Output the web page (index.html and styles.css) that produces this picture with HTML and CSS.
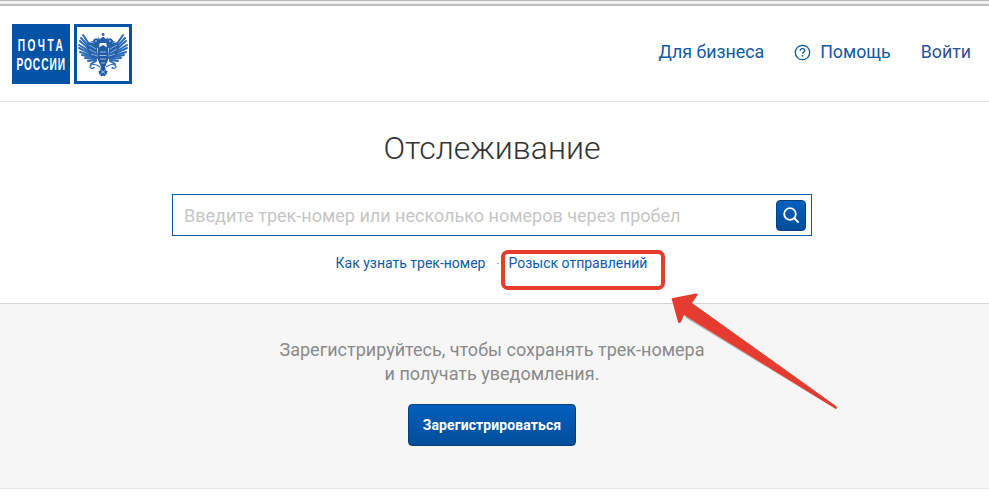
FILE: index.html
```html
<!DOCTYPE html>
<html lang="ru">
<head>
    <meta charset="UTF-8">
    <title>Отслеживание</title>
    <link rel="stylesheet" href="styles.css">
</head>
<body>
    <div class="browser-edge"></div>
    <header class="header">
        <a class="logo" href="#">
            <span class="logo-text"><span class="logo-line logo-line-wide">ПОЧТА</span><span class="logo-line">РОССИИ</span></span>
            <span class="logo-emblem">
                <svg width="52" height="54" viewBox="0 0 52 54">
                    <defs>
                        <g id="wing">
                            <g stroke="#2a6ab8" stroke-width="2" stroke-linecap="round" fill="none">
                                <path d="M19 27 L6 8"/>
                                <path d="M19 27 L4 11"/>
                                <path d="M19 28 L3 14"/>
                                <path d="M19 28 L2 18"/>
                                <path d="M19 29 L2 21"/>
                                <path d="M19 30 L3 25"/>
                                <path d="M19 31 L5 28"/>
                                <path d="M19 32 L8 31"/>
                                <path d="M19 33 L11 34"/>
                                <path d="M19 34 L14 37"/>
                            </g>
                            <path d="M20 17 L11 15 L10 21 L12 27 L16 31 L21 32 Z" fill="#2360ab"/>
                            <g stroke="#cfe0f3" stroke-width="0.6" fill="none">
                                <path d="M12 18 L19 22 M12 22 L19 26 M14 27 L20 29"/>
                            </g>
                            <path d="M23 14 C20 10 17 11 16 14 L13 15 L17 16 C18 19 20 21 22 22 Z" fill="#2360ab"/>
                            <circle cx="19" cy="14" r="0.7" fill="#fff"/>
                            <path d="M23 40 C19 37 15 37 13 39 C13 42 17 42 17 40" fill="none" stroke="#2a6ab8" stroke-width="1.3"/>
                            <path d="M22 44 L25 49" stroke="#2a6ab8" stroke-width="1.8"/>
                        </g>
                    </defs>
                    <use href="#wing"/>
                    <use href="#wing" transform="translate(52 0) scale(-1 1)"/>
                    <circle cx="26" cy="7.5" r="1.4" fill="#2a6ab8"/>
                    <path d="M21 10 L23 12 L26 9.5 L29 12 L31 10 L30 16 L22 16 Z" fill="#2360ab"/>
                    <path d="M21 21 L26 18 L31 21 L31 33 L28 40 L30 47 L26 49 L22 47 L24 40 L21 33 Z" fill="#1f5aa5"/>
                    <g stroke="#d5e4f5" stroke-width="0.7" fill="none">
                        <path d="M23 25 H29 M22.5 28.5 H29.5 M23 32 H29 M24 36 H28"/>
                        <path d="M23.5 43 L28.5 47 M28.5 43 L23.5 47"/>
                    </g>
                </svg>
            </span>
        </a>
        <nav class="nav">
            <a class="nav-link" href="#">Для бизнеса</a>
            <a class="nav-link" href="#">
                <svg class="help-icon" width="17" height="17" viewBox="0 0 17 17">
                    <circle cx="8.5" cy="8.5" r="7.2" fill="none" stroke="#0d5aa7" stroke-width="1.3"/>
                    <path d="M6.3 6.8 C6.3 5.3 7.3 4.7 8.5 4.7 C9.8 4.7 10.7 5.4 10.7 6.5 C10.7 7.9 8.6 8 8.6 9.7" fill="none" stroke="#0d5aa7" stroke-width="1.3"/>
                    <circle cx="8.6" cy="11.8" r="0.9" fill="#0d5aa7"/>
                </svg>
                Помощь
            </a>
            <a class="nav-link nav-link-login" href="#">Войти</a>
        </nav>
    </header>

    <main class="tracking">
        <h1 class="tracking-title">Отслеживание</h1>
        <form class="search">
            <input class="search-input" type="text" placeholder="Введите трек-номер или несколько номеров через пробел">
            <button class="search-button" type="button">
                <svg width="18" height="18" viewBox="0 0 18 18">
                    <circle cx="8" cy="8" r="5.8" fill="none" stroke="#fff" stroke-width="1.8"/>
                    <path d="M12.3 12.3 L16 16" stroke="#fff" stroke-width="2" stroke-linecap="round"/>
                </svg>
            </button>
        </form>
        <div class="tracking-links">
            <a href="#">Как узнать трек-номер</a>
            <span class="tracking-dot"></span>
            <a href="#">Розыск отправлений</a>
        </div>
    </main>

    <section class="promo">
        <p class="promo-text">Зарегистрируйтесь, чтобы сохранять трек-номера<br>и получать уведомления.</p>
        <button class="promo-button" type="button">Зарегистрироваться</button>
    </section>
    <div class="page-rest"></div>

    <!-- annotation drawn over the screenshot -->
    <div class="mark-box"></div>
    <svg class="mark-arrow" width="210" height="140" viewBox="0 0 210 140">
        <path d="M197 129 L44 36 L53 24 Z" fill="#777" opacity="0.5" transform="translate(1 1.5)"/>
        <path d="M196 126 Q198 128 196 129 L44 35 L41 42 Q39 44 38 42 L32 20 Q31 18 33 18 L56 13.5 Q59 14 57 16 L52 23 Z" fill="#e63c2f"/>
    </svg>
</body>
</html>
```

FILE: styles.css
```css
* {
    box-sizing: border-box;
}
html, body {
    height: 100%;
}
body {
    margin: 0;
    position: relative;
    overflow: hidden;
    background: #fff;
    font-family: Roboto, "Liberation Sans", sans-serif;
    color: #0d5aa7;
}
a {
    color: #0d5aa7;
    text-decoration: none;
}
.browser-edge {
    height: 6px;
    background: #f1f1f1;
    border-top: 1px solid #bcbcbc;
    border-bottom: 2px solid #bdbdbd;
}
.header {
    height: 96px;
    padding: 18px 18px 0 12px;
    display: flex;
    justify-content: space-between;
    border-bottom: 1px solid #e6e6e6;
}
.logo {
    display: flex;
    gap: 4px;
    height: 60px;
}
.logo-text {
    width: 58px;
    height: 60px;
    padding-top: 12px;
    display: flex;
    flex-direction: column;
    align-items: center;
    background: #0252a6;
    color: #fff;
    font-family: "Liberation Sans", sans-serif;
    font-size: 17px;
    font-weight: bold;
    line-height: 19px;
}
.logo-line {
    white-space: nowrap;
    letter-spacing: 1.5px;
    transform: scaleX(0.6);
}
.logo-line-wide {
    letter-spacing: 4px;
}
.logo-emblem {
    width: 58px;
    height: 60px;
    border: 3px solid #0252a6;
}
.logo-emblem svg {
    display: block;
}
.nav {
    display: flex;
    gap: 30px;
    padding-top: 17px;
    font-size: 17.8px;
    line-height: 22px;
}
.nav-link {
    display: flex;
    align-items: center;
    gap: 9px;
    height: 22px;
}
.nav-link-login {
    color: #2d4f96;
}
.tracking {
    height: 202px;
    padding: 26px 5px 0 0;
    display: flex;
    flex-direction: column;
    align-items: center;
    border-bottom: 1px solid #d2d2d2;
}
.tracking-title {
    margin: 0;
    font-size: 32px;
    font-weight: 300;
    line-height: 40px;
    color: #333;
}
.search {
    margin-top: 26px;
    width: 640px;
    height: 42px;
    border: 1px solid #0d5aa7;
    display: flex;
    align-items: center;
    padding: 0 5px 0 11px;
}
.search-input {
    flex: 1;
    border: none;
    outline: none;
    padding: 0;
    font-family: inherit;
    font-size: 18px;
    color: #333;
}
.search-input::placeholder {
    color: #c6c6c6;
    opacity: 1;
}
.search-button {
    width: 30px;
    height: 31px;
    padding: 0;
    display: flex;
    align-items: center;
    justify-content: center;
    border: 1px solid #0b3f7c;
    border-radius: 4px;
    background: linear-gradient(#0460bd, #024d99);
}
.tracking-links {
    margin: 18px 1px 0 0;
    display: flex;
    align-items: center;
    font-size: 14px;
    line-height: 18px;
}
.tracking-dot {
    width: 2px;
    height: 1px;
    background: #9fb4cc;
    margin: 1px 9px 0 12px;
}
.promo {
    height: 185px;
    padding: 34px 5px 0 0;
    display: flex;
    flex-direction: column;
    align-items: center;
    background: #f6f6f6;
    border-bottom: 1px solid #e6e6e6;
}
.promo-text {
    margin: 0;
    font-size: 18px;
    line-height: 24px;
    text-align: center;
    color: #8a8a8a;
}
.promo-button {
    margin-top: 18px;
    width: 168px;
    height: 42px;
    border: 1px solid #0b3f7c;
    border-radius: 4px;
    background: linear-gradient(#0460bd, #024d99);
    color: #fff;
    font-family: inherit;
    font-size: 14px;
    font-weight: 700;
    letter-spacing: 0.1px;
}
.page-rest {
    height: 10px;
    background: #fff;
}
.mark-box {
    position: absolute;
    left: 501px;
    top: 250px;
    width: 164px;
    height: 40px;
    border: 4px solid #e63c2f;
    border-radius: 7px;
}
.mark-arrow {
    position: absolute;
    left: 640px;
    top: 280px;
}
```
